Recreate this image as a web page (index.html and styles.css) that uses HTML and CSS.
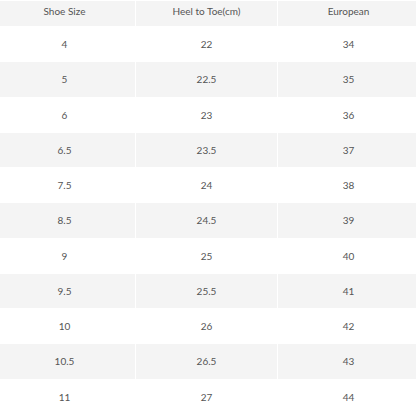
FILE: index.html
```html
<!DOCTYPE html>
<html>
<head>
<meta charset="utf-8">
<link rel="stylesheet" href="styles.css">
</head>
<body>
<table class="size-table">
  <thead>
    <tr><th>Shoe Size</th><th>Heel to Toe(cm)</th><th>European</th></tr>
  </thead>
  <tbody>
    <tr><td>4</td><td>22</td><td>34</td></tr>
    <tr><td>5</td><td>22.5</td><td>35</td></tr>
    <tr><td>6</td><td>23</td><td>36</td></tr>
    <tr><td>6.5</td><td>23.5</td><td>37</td></tr>
    <tr><td>7.5</td><td>24</td><td>38</td></tr>
    <tr><td>8.5</td><td>24.5</td><td>39</td></tr>
    <tr><td>9</td><td>25</td><td>40</td></tr>
    <tr><td>9.5</td><td>25.5</td><td>41</td></tr>
    <tr><td>10</td><td>26</td><td>42</td></tr>
    <tr><td>10.5</td><td>26.5</td><td>43</td></tr>
    <tr><td>11</td><td>27</td><td>44</td></tr>
  </tbody>
</table>
</body>
</html>
```
FILE: styles.css
```css
html, body {
  margin: 0;
  padding: 0;
  background: #ffffff;
  overflow: hidden;
}

.size-table {
  margin-left: -7px;
  width: 427px;
  border-collapse: separate;
  border-spacing: 1px;
  table-layout: fixed;
  font-family: Lato, "Open Sans", sans-serif;
  font-size: 10px;
  color: #555555;
}

.size-table th {
  font-weight: normal;
  background: #f4f4f4;
  height: 25px;
  padding: 0 0 6px;
  box-sizing: border-box;
  text-align: center;
  vertical-align: middle;
  line-height: 14px;
}

.size-table td {
  height: 34.25px;
  padding: 0;
  box-sizing: border-box;
  text-align: center;
  vertical-align: middle;
  line-height: 14px;
}

.size-table tbody tr:nth-child(even) td {
  background: #f4f4f4;
}
```
